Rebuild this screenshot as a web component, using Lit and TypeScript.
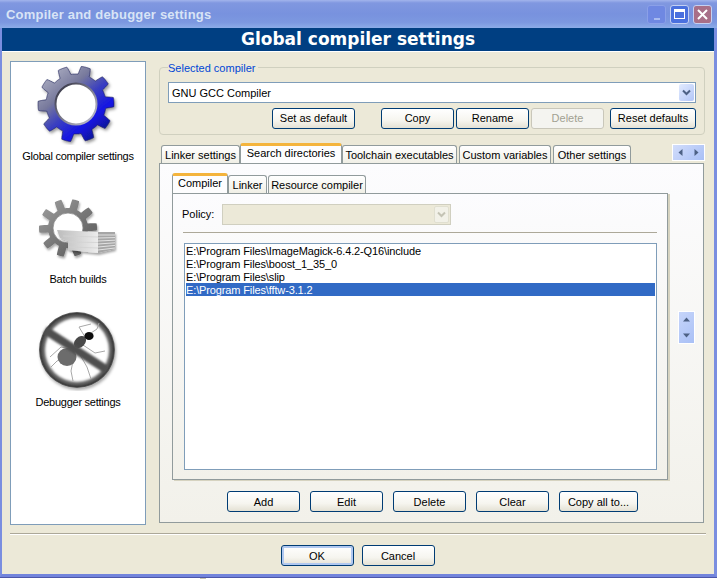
import { LitElement, html, css, svg } from 'lit';
import { customElement } from 'lit/decorators.js';

// rounded cog outline, sampled around the circle
function gearPath(cx: number, cy: number, root: number, tip: number, teeth: number, phase: number) {
  const pts: string[] = [];
  for (let i = 0; i < 360; i++) {
    const a = (i / 360) * Math.PI * 2;
    const k = Math.max(0, Math.min(1, 0.5 + 1.5 * Math.cos(teeth * a + phase)));
    const r = root + (tip - root) * k;
    pts.push(`${(cx + Math.cos(a) * r).toFixed(2)} ${(cy + Math.sin(a) * r).toFixed(2)}`);
  }
  return 'M' + pts.join('L') + 'Z';
}

const gearIcon = html`
  <svg class="icon" viewBox="0 0 90 82" width="90" height="82">
    <defs>
      <linearGradient id="gearFill" x1="0.12" y1="0.1" x2="0.8" y2="0.9">
        <stop offset="0" stop-color="#a9abc0" />
        <stop offset="0.32" stop-color="#77799c" />
        <stop offset="0.55" stop-color="#3a3fc0" />
        <stop offset="0.8" stop-color="#1414e4" />
        <stop offset="1" stop-color="#101a98" />
      </linearGradient>
      <linearGradient id="holeRing" x1="0" y1="0" x2="1" y2="1">
        <stop offset="0" stop-color="#2c2c3c" />
        <stop offset="1" stop-color="#c8c8d8" />
      </linearGradient>
      <filter id="gearShadow" x="-20%" y="-20%" width="140%" height="140%">
        <feDropShadow dx="1.5" dy="2" stdDeviation="1.6" flood-color="#000" flood-opacity="0.4" />
      </filter>
    </defs>
    <path
      d=${gearPath(43, 41, 30, 38, 10, 0.5)}
      fill="url(#gearFill)"
      stroke="#1c2058"
      stroke-width="0.6"
      filter="url(#gearShadow)"
    />
    <circle cx="43" cy="41" r="20.5" fill="#fff" stroke="url(#holeRing)" stroke-width="2" />
  </svg>
`;

const batchIcon = html`
  <svg class="icon" viewBox="0 0 90 62" width="90" height="62">
    <defs>
      <linearGradient id="batchGear" x1="0" y1="0" x2="1" y2="1">
        <stop offset="0" stop-color="#a0a0a0" />
        <stop offset="0.6" stop-color="#707070" />
        <stop offset="1" stop-color="#585858" />
      </linearGradient>
      <linearGradient id="paperFront" x1="0" y1="0" x2="1" y2="0">
        <stop offset="0" stop-color="#bcbcbc" />
        <stop offset="1" stop-color="#ececec" />
      </linearGradient>
      <filter id="softShadow" x="-20%" y="-20%" width="140%" height="140%">
        <feDropShadow dx="1" dy="2" stdDeviation="1.2" flood-color="#000" flood-opacity="0.35" />
      </filter>
    </defs>
    <path
      d=${gearPath(35, 29, 20, 29, 10, 0.4)}
      fill="url(#batchGear)"
      filter="url(#softShadow)"
    />
    <circle cx="35" cy="29" r="15" fill="#fff" stroke="#8a8a8a" stroke-width="0.8" />
    <g filter="url(#softShadow)">
      <path d="M24 31 L65 33 L65 54 L35 51 L35 42 L27 39 Z" fill="url(#paperFront)" />
      <path d="M65 33 L82 33 L82 50 L65 54 Z" fill="#a6a6a6" />
      <path
        d="M65 36 L82 36 M65 39 L82 38.6 M65 42 L82 41.2 M65 45 L82 43.8 M65 48 L82 46.4 M65 51 L82 49"
        stroke="#e2e2e2"
        stroke-width="1"
      />
      <path d="M30 37 L65 38 M36 43 L65 43.5 M36 48 L65 49" stroke="#d2d2d2" stroke-width="0.8" />
    </g>
  </svg>
`;

const debugIcon = html`
  <svg class="icon" viewBox="0 0 90 82" width="90" height="82">
    <defs>
      <radialGradient id="ringFill" cx="0.5" cy="0.5" r="0.5">
        <stop offset="0.8" stop-color="#a8a8a8" />
        <stop offset="0.88" stop-color="#6a6a6a" />
        <stop offset="0.96" stop-color="#3c3c3c" />
        <stop offset="1" stop-color="#6a6a6a" />
      </radialGradient>
      <filter id="blur1" x="-20%" y="-20%" width="140%" height="140%">
        <feGaussianBlur stdDeviation="1.1" />
      </filter>
      <filter id="blur2" x="-20%" y="-20%" width="140%" height="140%">
        <feGaussianBlur stdDeviation="0.6" />
      </filter>
      <filter id="ringShadow" x="-20%" y="-20%" width="140%" height="140%">
        <feDropShadow dx="1" dy="2" stdDeviation="1.4" flood-color="#000" flood-opacity="0.35" />
      </filter>
    </defs>
    <circle cx="44" cy="41" r="38" fill="url(#ringFill)" filter="url(#ringShadow)" />
    <circle cx="44" cy="41" r="31.5" fill="#fff" filter="url(#blur1)" />
    <g fill="none" stroke="#a8a8a8" stroke-width="1" filter="url(#blur2)">
      <path d="M38 40 L28 38 L17 48" />
      <path d="M36 46 L24 52 L18 58" />
      <path d="M40 52 L38 62 L40 72" />
      <path d="M50 36 L62 44 L72 42" />
      <path d="M46 44 L54 58 L58 70" />
      <path d="M52 28 L46 18 L58 15" />
      <path d="M58 24 L64 20 L66 14" />
    </g>
    <g filter="url(#blur2)">
      <ellipse cx="34" cy="48" rx="9.5" ry="9" fill="#6c6c6c" />
      <ellipse cx="47" cy="33" rx="5" ry="7" fill="#4a4a4a" transform="rotate(45 47 33)" />
      <ellipse cx="56" cy="27" rx="4.6" ry="4" fill="#0c0c0c" />
    </g>
    <path d="M12 21 L74 61" stroke="#505050" stroke-width="8.5" filter="url(#blur1)" />
  </svg>
`;

@customElement('app-root')
export class AppRoot extends LitElement {
  static styles = css`
    :host {
      display: block;
      width: 717px;
      height: 579px;
      background: #fff;
      overflow: hidden;
      font-family: 'Liberation Sans', Arial, sans-serif;
      font-size: 11px;
      line-height: 13px;
      color: #000;
    }

    .window {
      height: 577px;
      box-sizing: border-box;
      display: flex;
      flex-direction: column;
      border-left: 2px solid #7a8ee0;
      border-right: 3px solid #7a8ee0;
      border-bottom: 3px solid #7284dc;
    }

    .edge {
      height: 1px;
      background: #4c56a8;
    }

    .desktop-mark {
      height: 1px;
      width: 6px;
      margin-left: 200px;
      background: #c8c4b0;
    }

    .titlebar {
      height: 28px;
      flex: none;
      margin: 0 -3px 0 -2px;
      padding: 0 6px;
      display: flex;
      align-items: center;
      background: linear-gradient(#a2b4ec 0, #8097e0 3px, #7892de 50%, #7c98e0 80%, #8cace8 100%);
    }

    .title {
      flex: 1;
      font-family: 'Liberation Sans', sans-serif;
      font-weight: bold;
      font-size: 13px;
      letter-spacing: 0.2px;
      color: #d8e4f6;
    }

    .caption-buttons {
      display: flex;
      gap: 4px;
      margin-right: -1px;
    }

    .caption {
      width: 19px;
      height: 19px;
      box-sizing: border-box;
      border: 1px solid #c4d0f2;
      border-radius: 3px;
      display: flex;
      align-items: center;
      justify-content: center;
    }

    .caption.min {
      background: #6f88e2;
      border-color: #8ba0e8;
      align-items: flex-end;
      padding-bottom: 3px;
    }

    .caption.min i {
      display: block;
      width: 6px;
      height: 2px;
      background: #a9bbf0;
    }

    .caption.max {
      background: #4a70de;
    }

    .caption.max i {
      display: block;
      width: 11px;
      height: 10px;
      box-sizing: border-box;
      border: 1px solid #fff;
      border-top-width: 3px;
    }

    .caption.close {
      background: #a86f88;
    }

    .banner {
      height: 23px;
      flex: none;
      background: #003f82;
      border-bottom: 1px solid #fff;
      color: #fff;
      text-align: center;
      font-family: 'DejaVu Sans', sans-serif;
      font-weight: bold;
      font-size: 17px;
      line-height: 23px;
    }

    .body {
      flex: 1;
      background: #ece9d8;
      padding: 9px 0 0 8px;
    }

    .main {
      display: flex;
      height: 464px;
    }

    .sidebar {
      width: 136px;
      height: 464px;
      box-sizing: border-box;
      background: #fff;
      border: 1px solid #7f9db9;
      display: flex;
      flex-direction: column;
      align-items: center;
      flex: none;
    }

    .side-item {
      display: flex;
      flex-direction: column;
      align-items: center;
    }

    .side-item span {
      white-space: nowrap;
      letter-spacing: -0.25px;
    }

    .icon {
      display: block;
    }

    .right {
      margin-left: 13px;
      width: 547px;
      flex: none;
    }

    .group {
      margin-top: 6px;
      width: 546px;
      height: 68px;
      box-sizing: border-box;
      border: 1px solid #d0d0bf;
      border-radius: 4px;
      padding: 0 8px;
    }

    .legend {
      display: table;
      margin-top: -6px;
      padding: 0 3px 0 0;
      background: #ece9d8;
      color: #0046d5;
    }

    .combo {
      height: 21px;
      box-sizing: border-box;
      border: 1px solid #7f9db9;
      background: #fff;
      display: flex;
      align-items: center;
      padding-left: 3px;
      margin-top: 7px;
    }

    .combo span {
      flex: 1;
      padding-top: 1px;
    }

    .arrow {
      width: 15px;
      height: 17px;
      margin-right: 1px;
      box-sizing: border-box;
      background: linear-gradient(135deg, #e2ebfe, #b2c6f8);
      border-radius: 2px;
      display: flex;
      align-items: center;
      justify-content: center;
    }

    .combo.disabled {
      margin: 0 0 0 10px;
      width: 229px;
      background: #ece9d8;
      border-color: #d0cfc0;
    }

    .combo.disabled .arrow {
      background: #f2f1e8;
      border: 1px solid #e0dfd0;
    }

    .btn {
      height: 21px;
      box-sizing: border-box;
      border: 1px solid #003c74;
      border-radius: 3px;
      background: linear-gradient(#fff 0, #f6f5ef 60%, #e4e1d4 100%);
      display: flex;
      align-items: center;
      justify-content: center;
      white-space: nowrap;
      flex: none;
    }

    .btn.disabled {
      border-color: #c9c7ba;
      background: #f4f4f0;
      color: #a1a192;
    }

    .btn.default {
      box-shadow: inset 0 0 0 2px #b0c8f0;
    }

    .group-buttons {
      display: flex;
      justify-content: flex-end;
      margin-top: 5px;
      gap: 2px;
    }

    .tabs {
      display: flex;
      align-items: flex-end;
      height: 20px;
      margin-top: 8px;
      padding-left: 2px;
    }

    .tab {
      height: 18px;
      box-sizing: border-box;
      border: 1px solid #919b9c;
      border-bottom: none;
      border-radius: 3px 3px 0 0;
      background: linear-gradient(#fff, #f0efe6);
      display: flex;
      align-items: center;
      justify-content: center;
      white-space: nowrap;
      flex: none;
      padding-top: 1px;
    }

    .tab.active {
      height: 20px;
      background: #fdfdfe;
      border-top: 3px solid #f4b43c;
      padding-top: 0;
      padding-bottom: 3px;
    }

    .scroller {
      margin-left: auto;
      margin-right: 1px;
      margin-bottom: 2px;
      width: 33px;
      height: 17px;
      box-sizing: border-box;
      border: 1px solid #fff;
      background: linear-gradient(135deg, #d2ddfb, #a9c0f6);
      display: flex;
      align-items: center;
      justify-content: space-around;
    }

    .panel {
      width: 545px;
      height: 360px;
      box-sizing: border-box;
      border: 1px solid #919b9c;
      background: linear-gradient(#fcfcfe, #f2f1ea);
      padding: 9px 0 0 12px;
    }

    .inner-row {
      display: flex;
    }

    .inner-tabs {
      display: flex;
      align-items: flex-end;
      height: 20px;
    }

    .inner-panel {
      width: 496px;
      height: 287px;
      box-sizing: border-box;
      border: 1px solid #919b9c;
      background: linear-gradient(#fcfcfe, #f2f1ea);
      box-shadow: 2px 1px 0 #d6d3c0;
      padding: 10px 10px 0;
    }

    .policy {
      display: flex;
      align-items: center;
      height: 21px;
      margin-left: -1px;
    }

    .policy label {
      width: 30px;
    }

    .separator {
      height: 1px;
      background: #aca899;
      margin: 7px 0 0 0;
    }

    .list {
      margin: 10px 0 0 1px;
      height: 227px;
      width: 473px;
      box-sizing: border-box;
      border: 1px solid #7f9db9;
      background: #fff;
      padding: 0 1px;
    }

    .row {
      height: 13px;
      line-height: 15px;
      white-space: nowrap;
      letter-spacing: -0.13px;
    }

    .row.selected {
      background: #316ac5;
      color: #fff;
    }

    .updown {
      margin: 118px 0 0 10px;
      width: 17px;
      height: 33px;
      box-sizing: border-box;
      border: 1px solid #fff;
      background: linear-gradient(135deg, #c6d5fa, #a9c0f6);
      display: flex;
      flex-direction: column;
      align-items: center;
      justify-content: space-around;
      flex: none;
    }

    .panel-buttons {
      display: flex;
      gap: 10px;
      margin: 11px 0 0 55px;
    }

    .panel-buttons .btn {
      padding-top: 1px;
    }

    .divider {
      height: 1px;
      width: 696px;
      background: #aca899;
      border-bottom: 1px solid #fff;
      margin-top: 8px;
    }

    .footer {
      display: flex;
      justify-content: center;
      gap: 8px;
      margin: 10px 0 0;
      padding-right: 2px;
      width: 713px;
      box-sizing: border-box;
      margin-left: -8px;
    }

    .footer .btn {
      padding-top: 1px;
    }
  `;

  private chevron(color: string) {
    return html`<svg width="9" height="7" viewBox="0 0 9 7">
      <path d="M1 1.5 L4.5 5 L8 1.5" fill="none" stroke=${color} stroke-width="2" />
    </svg>`;
  }

  private triangle(points: string) {
    return html`<svg width="7" height="7" viewBox="0 0 7 7">
      ${svg`<polygon points=${points} fill="#4d6185" />`}
    </svg>`;
  }

  private btn(text: string, width: number, extra = '') {
    return html`<div class="btn ${extra}" style="width:${width}px">${text}</div>`;
  }

  private tab(text: string, width: number, active = false) {
    return html`<div class="tab ${active ? 'active' : ''}" style="width:${width}px">${text}</div>`;
  }

  render() {
    const dirs = [
      'E:\\Program Files\\ImageMagick-6.4.2-Q16\\include',
      'E:\\Program Files\\boost_1_35_0',
      'E:\\Program Files\\slip',
      'E:\\Program Files\\fftw-3.1.2',
    ];

    return html`
      <div class="window">
        <div class="titlebar">
          <div class="title">Compiler and debugger settings</div>
          <div class="caption-buttons">
            <div class="caption min"><i></i></div>
            <div class="caption max"><i></i></div>
            <div class="caption close">
              <svg width="11" height="11" viewBox="0 0 11 11">
                <path d="M1 1 L10 10 M10 1 L1 10" stroke="#fff" stroke-width="2" />
              </svg>
            </div>
          </div>
        </div>
        <div class="banner">Global compiler settings</div>
        <div class="body">
          <div class="main">
            <div class="sidebar">
              <div class="side-item" style="margin-top:1px">
                ${gearIcon}
                <span style="margin-top:5px">Global compiler settings</span>
              </div>
              <div class="side-item" style="margin-top:36px">
                ${batchIcon}
                <span style="margin-top:12px">Batch builds</span>
              </div>
              <div class="side-item" style="margin-top:23px">
                ${debugIcon}
                <span style="margin-top:5px">Debugger settings</span>
              </div>
            </div>
            <div class="right">
              <div class="group">
                <div class="legend">Selected compiler</div>
                <div class="combo">
                  <span>GNU GCC Compiler</span>
                  <div class="arrow">${this.chevron('#4d6185')}</div>
                </div>
                <div class="group-buttons">
                  ${this.btn('Set as default', 83)}
                  <div style="width:22px"></div>
                  ${this.btn('Copy', 73)} ${this.btn('Rename', 73)}
                  ${this.btn('Delete', 73, 'disabled')}
                  <div style="width:2px"></div>
                  ${this.btn('Reset defaults', 86)}
                </div>
              </div>
              <div class="tabs">
                ${this.tab('Linker settings', 79)} ${this.tab('Search directories', 102, true)}
                ${this.tab('Toolchain executables', 115)}
                <div style="width:2px"></div>
                ${this.tab('Custom variables', 92)}
                <div style="width:2px"></div>
                ${this.tab('Other settings', 78)}
                <div class="scroller">
                  ${this.triangle('5.5,0 1.5,3.5 5.5,7')} ${this.triangle('1.5,0 5.5,3.5 1.5,7')}
                </div>
              </div>
              <div class="panel">
                <div class="inner-tabs">
                  ${this.tab('Compiler', 56, true)} ${this.tab('Linker', 39)}
                  <div style="width:1px"></div>
                  ${this.tab('Resource compiler', 98)}
                </div>
                <div class="inner-row">
                  <div class="inner-panel">
                    <div class="policy">
                      <label>Policy:</label>
                      <div class="combo disabled">
                        <span></span>
                        <div class="arrow">${this.chevron('#c4c3b4')}</div>
                      </div>
                    </div>
                    <div class="separator"></div>
                    <div class="list">
                      ${dirs.map(
                        (d, i) =>
                          html`<div class="row ${i === 3 ? 'selected' : ''}">${d}</div>`
                      )}
                    </div>
                  </div>
                  <div class="updown">
                    ${this.triangle('0,5.5 3.5,1.5 7,5.5')} ${this.triangle('0,1.5 3.5,5.5 7,1.5')}
                  </div>
                </div>
                <div class="panel-buttons">
                  ${this.btn('Add', 73)} ${this.btn('Edit', 73)} ${this.btn('Delete', 73)}
                  ${this.btn('Clear', 73)} ${this.btn('Copy all to...', 79)}
                </div>
              </div>
            </div>
          </div>
          <div class="divider"></div>
          <div class="footer">
            ${this.btn('OK', 73, 'default')} ${this.btn('Cancel', 73)}
          </div>
        </div>
      </div>
      <div class="edge"></div>
      <div class="desktop-mark"></div>
    `;
  }
}

declare global {
  interface HTMLElementTagNameMap {
    'app-root': AppRoot;
  }
}
